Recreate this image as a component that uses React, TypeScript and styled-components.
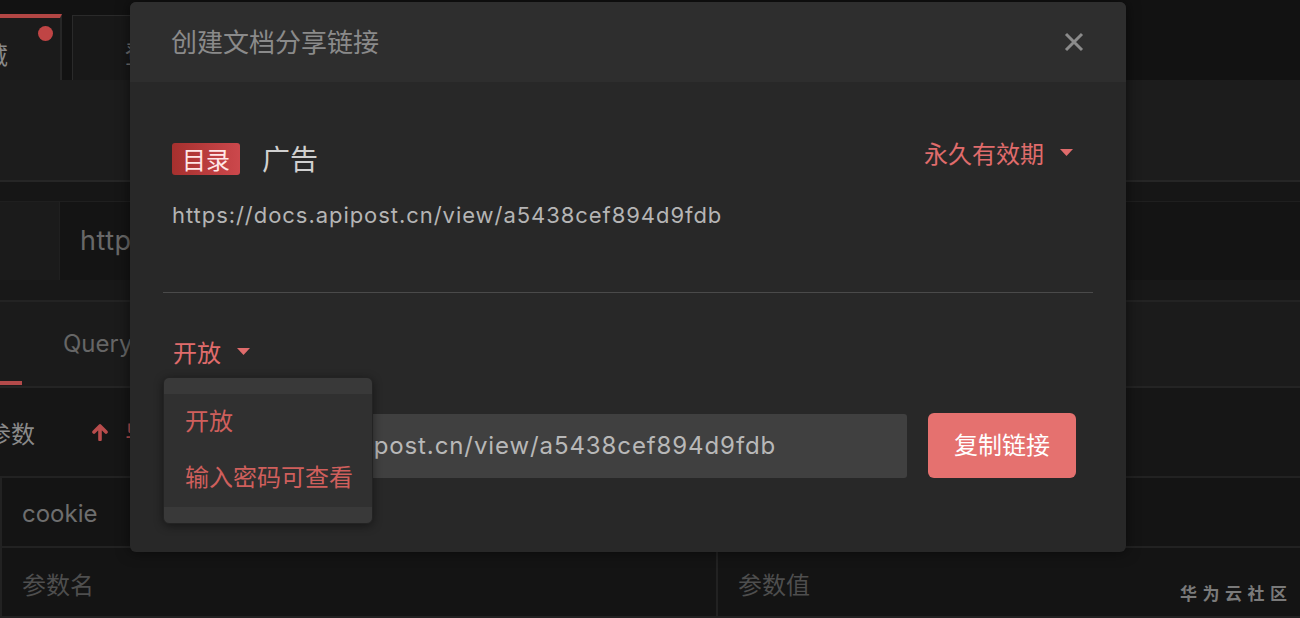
import React from "react";
import styled, { createGlobalStyle } from "styled-components";

const GlobalStyle = createGlobalStyle`
  html, body {
    margin: 0;
    padding: 0;
    width: 1300px;
    height: 618px;
    overflow: hidden;
    background: #141414;
  }
  body {
    font-family: Inter, "Noto Sans CJK SC", sans-serif;
  }
  * { box-sizing: border-box; }
`;

const Page = styled.div`
  position: relative;
  width: 1300px;
  height: 618px;
  overflow: hidden;
  display: flex;
  flex-direction: column;
  background: #141414;
`;

/* ---------- background app ---------- */
const TopBar = styled.div`
  height: 80px;
  flex: none;
  display: flex;
  align-items: flex-end;
  background: #121212;
`;

const AppTab = styled.div<{ $active?: boolean }>`
  position: relative;
  height: ${(p) => (p.$active ? 66 : 65)}px;
  display: flex;
  align-items: center;
  padding-top: 8px;
  font-size: 24px;
  color: ${(p) => (p.$active ? "#8a8a8a" : "#6f6f6f")};
  background: ${(p) => (p.$active ? "#1b1b1b" : "#181818")};
  border-top: ${(p) => (p.$active ? "4px solid #b24644" : "1px solid #2a2a2a")};
  border-right: 2px solid #262626;
  border-left: ${(p) => (p.$active ? "none" : "1px solid #2a2a2a")};
`;

const ActiveTab = styled(AppTab)`
  margin-left: -60px;
  width: 122px;
  padding-left: 20px;
`;

const OtherTab = styled(AppTab)`
  margin-left: 10px;
  width: 220px;
  padding-left: 52px;
`;

const Dot = styled.span`
  position: absolute;
  right: 7px;
  top: 8px;
  width: 15px;
  height: 15px;
  border-radius: 50%;
  background: #c04545;
`;

const Toolbar = styled.div`
  height: 102px;
  flex: none;
  background: #1c1c1c;
  border-bottom: 2px solid #262626;
`;

const Gap = styled.div`
  height: 20px;
  flex: none;
  background: #161616;
  border-bottom: 1px solid #1f1f1f;
`;

const UrlRow = styled.div`
  height: 78px;
  flex: none;
  display: flex;
`;

const MethodBox = styled.div`
  width: 60px;
  background: #1b1b1b;
  border-right: 1px solid #202020;
`;

const UrlBox = styled.div`
  flex: 1;
  display: flex;
  align-items: center;
  padding-left: 20px;
  padding-bottom: 2px;
  background: #141414;
  font-size: 27px;
  letter-spacing: 0.5px;
  color: #686868;
`;

const UrlFoot = styled.div`
  height: 22px;
  flex: none;
  background: #181818;
  border-bottom: 2px solid #232323;
`;

const TabRow = styled.div`
  height: 86px;
  flex: none;
  display: flex;
  background: #1b1b1b;
  border-bottom: 2px solid #242424;
`;

const ReqTab = styled.div<{ $active?: boolean }>`
  display: flex;
  align-items: center;
  font-size: 24px;
  color: #666;
  ${(p) =>
    p.$active
      ? `width: 22px; border-bottom: 4px solid #b34a4a; margin-bottom: 1px;`
      : `padding-left: 41px; padding-bottom: 2px;`}
`;

const ParamBar = styled.div`
  height: 90px;
  flex: none;
  display: flex;
  align-items: center;
  background: #161616;
  border-bottom: 2px solid #222;
`;

const ParamLabel = styled.span`
  margin-left: -13px;
  font-size: 24px;
  color: #8a8a8a;
`;

const ImportBtn = styled.span`
  display: flex;
  align-items: center;
  gap: 17px;
  margin-left: 57px;
  font-size: 24px;
  color: #b84c4c;
`;

const Table = styled.div`
  flex: 1;
  display: flex;
  flex-direction: column;
  border-left: 2px solid #222;
`;

const TRow = styled.div`
  height: 70px;
  flex: none;
  display: flex;
  background: #141414;
  border-bottom: 2px solid #222;
`;

const TCell = styled.div<{ $w?: number; $muted?: boolean }>`
  ${(p) => (p.$w ? `width: ${p.$w}px; border-right: 2px solid #222;` : "flex: 1;")}
  display: flex;
  align-items: center;
  padding-left: 20px;
  padding-top: 3px;
  font-size: 24px;
  color: ${(p) => (p.$muted ? "#4e4e4e" : "#6e6e6e")};
`;

const Watermark = styled.div`
  position: absolute;
  left: 1180px;
  top: 580px;
  font-size: 17px;
  font-weight: 700;
  letter-spacing: 5.5px;
  color: #7a7a7a;
  font-family: "Noto Sans CJK SC", sans-serif;
`;

/* ---------- modal ---------- */
const Modal = styled.div`
  position: absolute;
  left: 130px;
  top: 2px;
  width: 996px;
  height: 550px;
  background: #282828;
  border-radius: 6px;
  box-shadow: 0 0 14px rgba(0, 0, 0, 0.55);
  display: flex;
  flex-direction: column;
`;

const ModalHeader = styled.div`
  height: 80px;
  flex: none;
  display: flex;
  align-items: center;
  justify-content: space-between;
  padding: 0 42px 0 41px;
  background: #2e2e2e;
  border-radius: 6px 6px 0 0;
`;

const Title = styled.div`
  font-size: 26px;
  color: #8a8a8a;
  padding-bottom: 4px;
`;

const CloseBtn = styled.button`
  width: 20px;
  height: 20px;
  padding: 0;
  border: none;
  background: none;
  display: flex;
  color: #8b8b8b;
`;

const ModalBody = styled.div`
  padding: 61px 33px 0;
  display: flex;
  flex-direction: column;
`;

const InfoRow = styled.div`
  height: 32px;
  display: flex;
  align-items: center;
  padding: 0 20px 0 9px;
`;

const Badge = styled.span`
  height: 32px;
  padding: 0 10px 2px;
  display: flex;
  align-items: center;
  font-size: 24px;
  color: #ffe6e6;
  border-radius: 3px;
  background: linear-gradient(90deg, #a6302e, #cc484c);
`;

const DocName = styled.span`
  margin-left: 22px;
  padding-bottom: 2px;
  font-size: 28px;
  color: #d0d0d0;
`;

const Picker = styled.span<{ $push?: boolean; $lift?: number }>`
  display: flex;
  align-items: center;
  gap: 16px;
  font-size: 24px;
  color: #e06c6c;
  padding-bottom: ${(p) => p.$lift ?? 0}px;
  ${(p) => (p.$push ? "margin-left: auto;" : "")}
`;

const Caret = () => (
  <svg width="13" height="7" viewBox="0 0 13 7">
    <path d="M0 0h13L6.5 7z" fill="#e06c6c" />
  </svg>
);

const LinkText = styled.div`
  margin-top: 25px;
  padding-left: 9px;
  font-size: 22px;
  line-height: 30px;
  letter-spacing: 0.95px;
  color: #b5b5b5;
`;

const Divider = styled.div`
  margin-top: 62px;
  height: 1px;
  background: #4a4a4a;
`;

const AccessRow = styled.div`
  position: relative;
  margin-top: 44px;
  height: 32px;
  display: flex;
  align-items: center;
  padding-left: 10px;
`;

const Menu = styled.div`
  position: absolute;
  left: 0;
  top: 40px;
  width: 210px;
  padding: 16px 0;
  background: #393939;
  border: 1px solid #232323;
  border-radius: 6px;
  box-shadow: 0 2px 10px rgba(0, 0, 0, 0.45);
  z-index: 2;
`;

const MenuList = styled.div`
  background: #303030;
`;

const MenuItem = styled.div`
  height: 56.5px;
  display: flex;
  align-items: center;
  padding: 0 0 6px 21px;
  font-size: 24px;
  color: #cf5f5c;
`;

const InputRow = styled.div`
  margin-top: 44px;
  display: flex;
  align-items: center;
  gap: 21px;
  padding-right: 17px;
`;

const LinkField = styled.div`
  flex: 1;
  height: 64px;
  display: flex;
  align-items: center;
  padding-left: 19px;
  overflow: hidden;
  white-space: nowrap;
  background: #404040;
  border-radius: 3px;
  font-size: 24px;
  letter-spacing: 0.9px;
  color: #b8b8b8;
`;

const CopyButton = styled.button`
  width: 148px;
  height: 65px;
  padding: 0 0 4px;
  border: none;
  border-radius: 6px;
  background: #e5716f;
  color: #fff;
  font-family: inherit;
  font-size: 24px;
`;

const URL = "https://docs.apipost.cn/view/a5438cef894d9fdb";

export default function App() {
  return (
    <>
      <GlobalStyle />
      <Page>
        <TopBar>
          <ActiveTab $active>
            收藏
            <Dot />
          </ActiveTab>
          <OtherTab>登录</OtherTab>
        </TopBar>
        <Toolbar />
        <Gap />
        <UrlRow>
          <MethodBox />
          <UrlBox>https://</UrlBox>
        </UrlRow>
        <UrlFoot />
        <TabRow>
          <ReqTab $active />
          <ReqTab>Query</ReqTab>
        </TabRow>
        <ParamBar>
          <ParamLabel>参数</ParamLabel>
          <ImportBtn>
            <svg width="16" height="18" viewBox="0 0 16 18">
              <path
                d="M8 16.5V3M2 9L8 3L14 9"
                stroke="#b84c4c"
                strokeWidth="3.6"
                strokeLinecap="round"
                strokeLinejoin="round"
                fill="none"
              />
            </svg>
            导入
          </ImportBtn>
        </ParamBar>
        <Table>
          <TRow>
            <TCell>cookie</TCell>
          </TRow>
          <TRow>
            <TCell $w={716} $muted>
              参数名
            </TCell>
            <TCell $muted>参数值</TCell>
          </TRow>
        </Table>
        <Watermark>华为云社区</Watermark>

        <Modal>
          <ModalHeader>
            <Title>创建文档分享链接</Title>
            <CloseBtn aria-label="close">
              <svg width="20" height="20" viewBox="0 0 20 20">
                <path d="M2 2L18 18M18 2L2 18" stroke="currentColor" strokeWidth="3" />
              </svg>
            </CloseBtn>
          </ModalHeader>
          <ModalBody>
            <InfoRow>
              <Badge>目录</Badge>
              <DocName>广告</DocName>
              <Picker $push $lift={14}>
                永久有效期
                <Caret />
              </Picker>
            </InfoRow>
            <LinkText>{URL}</LinkText>
            <Divider />
            <AccessRow>
              <Picker $lift={4}>
                开放
                <Caret />
              </Picker>
              <Menu>
                <MenuList>
                  <MenuItem>开放</MenuItem>
                  <MenuItem>输入密码可查看</MenuItem>
                </MenuList>
              </Menu>
            </AccessRow>
            <InputRow>
              <LinkField>{URL}</LinkField>
              <CopyButton>复制链接</CopyButton>
            </InputRow>
          </ModalBody>
        </Modal>
      </Page>
    </>
  );
}
